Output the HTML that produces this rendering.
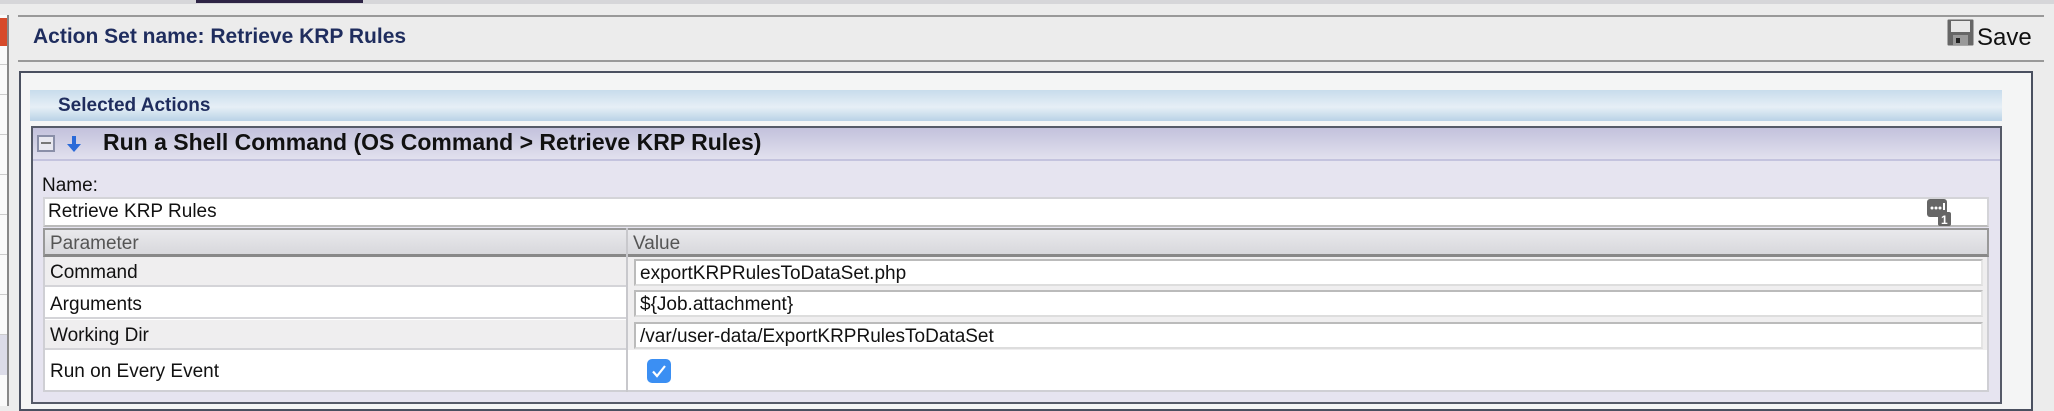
<!DOCTYPE html><html><head><style>
*{margin:0;padding:0;box-sizing:border-box}
body{width:2054px;height:406px;background:#ececec;position:relative;overflow:hidden;font-family:"Liberation Sans",sans-serif}
.a{position:absolute}
.t{white-space:nowrap;line-height:1}
.sr{position:absolute;left:0;width:7px;height:1px;background:#ccc}
</style></head><body>
<div class="a" style="left:0;top:0;width:2054px;height:4px;background:#d6d6d9"></div>
<div class="a" style="left:196px;top:0;width:167px;height:3px;background:#2e2445"></div>
<div class="a" style="left:0;top:15px;width:9px;height:391px;background:#fafafa;border-right:2px solid #888"></div>
<div class="a" style="left:0;top:18px;width:7px;height:28px;background:#d64a2a"></div>
<div class="sr" style="top:64px"></div><div class="sr" style="top:94px"></div><div class="sr" style="top:134px"></div><div class="sr" style="top:174px"></div><div class="sr" style="top:214px"></div><div class="sr" style="top:254px"></div><div class="sr" style="top:294px"></div><div class="sr" style="top:334px"></div><div class="sr" style="top:374px"></div>
<div class="a" style="left:0;top:335px;width:7px;height:40px;background:#dcdce8"></div>
<div class="a" style="left:18px;top:15px;width:2026px;height:2px;background:#999"></div>
<div class="a" style="left:18px;top:60px;width:2026px;height:2px;background:#999"></div>
<div class="a t" style="left:33px;top:26px;font-size:21px;font-weight:bold;color:#1f2d5e">Action Set name: Retrieve KRP Rules</div>
<svg class="a" style="left:1947px;top:19px" width="27" height="27" viewBox="0 0 27 27"><rect x="0.5" y="0.5" width="26" height="26" fill="#666" rx="1"/><rect x="4" y="2" width="19" height="11" fill="#e8e8e8"/><rect x="6" y="16" width="15" height="10" fill="#999"/><rect x="9" y="19" width="4" height="5" fill="#222"/></svg>
<div class="a t" style="left:1977px;top:26px;font-size:24px;color:#111">Save</div>
<div class="a" style="left:19px;top:71px;width:2014px;height:340px;background:#f4f5f5;border:2px solid #4a5060"></div>
<div class="a" style="left:30px;top:90px;width:1972px;height:31px;background:linear-gradient(#c8dcec,#e6eff6 55%,#b9d2e6)"></div>
<div class="a t" style="left:58px;top:96px;font-size:19px;font-weight:bold;color:#1f2d5e">Selected Actions</div>
<div class="a" style="left:31px;top:126px;width:1971px;height:278px;background:#e6e4f0;border:2px solid #555a68"></div>
<div class="a" style="left:33px;top:128px;width:1967px;height:33px;background:linear-gradient(#c3c1dc,#e1e0ee);border-bottom:2px solid #c4c3de"></div>
<div class="a" style="left:37px;top:135px;width:18px;height:17px;border:2px solid #8a8fa8;background:#e8e8f0"></div>
<div class="a" style="left:41px;top:142px;width:10px;height:2px;background:#777"></div>
<svg class="a" style="left:64px;top:134px" width="20" height="20" viewBox="0 0 20 20"><path d="M10 2v12" stroke="#2a6ad8" stroke-width="4"/><path d="M3 10l7 8 7-8z" fill="#2a6ad8"/></svg>
<div class="a t" style="left:103px;top:131px;font-size:23px;font-weight:bold;color:#111">Run a Shell Command (OS Command &gt; Retrieve KRP Rules)</div>
<div class="a t" style="left:42px;top:176px;font-size:19px;color:#111">Name:</div>
<div class="a" style="left:43px;top:197px;width:1946px;height:30px;background:#fff;border:2px solid #d4d4d8;border-bottom-color:#bbb"></div>
<div class="a t" style="left:48px;top:202px;font-size:19px;color:#111">Retrieve KRP Rules</div>
<svg class="a" style="left:1927px;top:199px" width="24" height="27" viewBox="0 0 24 27"><rect x="0" y="0" width="20" height="18" rx="3" fill="#666"/><circle cx="5" cy="9" r="1.5" fill="#fff"/><circle cx="9" cy="9" r="1.5" fill="#fff"/><circle cx="13" cy="9" r="1.5" fill="#fff"/><rect x="16" y="4" width="2" height="7" fill="#fff"/><rect x="11" y="13" width="13" height="14" rx="2" fill="#666"/><text x="14" y="25" font-size="12" font-weight="bold" fill="#fff" font-family="Liberation Sans">1</text></svg>
<div class="a" style="left:43px;top:228px;width:1946px;height:164px;background:#fff;border:2px solid #cfcfd4"></div>
<div class="a" style="left:43px;top:228px;width:1946px;height:29px;background:linear-gradient(#e9e9ec,#d8d8dc);border:2px solid #999;border-bottom:3px solid #888"></div>
<div class="a" style="left:626px;top:228px;width:2px;height:164px;background:#c8c8cc"></div>
<div class="a t" style="left:50px;top:234px;font-size:19px;color:#555">Parameter</div>
<div class="a t" style="left:633px;top:234px;font-size:19px;color:#555">Value</div>
<div class="a" style="left:45px;top:257px;width:581px;height:30px;background:#efeeef;border-bottom:2px solid #d4d4d8"></div>
<div class="a" style="left:45px;top:289px;width:581px;height:30px;background:#fff;border-bottom:2px solid #d4d4d8"></div>
<div class="a" style="left:45px;top:320px;width:581px;height:30px;background:#efeeef;border-bottom:2px solid #d4d4d8"></div>
<div class="a t" style="left:50px;top:263px;font-size:19px;color:#111">Command</div>
<div class="a t" style="left:50px;top:295px;font-size:19px;color:#111">Arguments</div>
<div class="a t" style="left:50px;top:326px;font-size:19px;color:#111">Working Dir</div>
<div class="a t" style="left:50px;top:362px;font-size:19px;color:#111">Run on Every Event</div>
<div class="a" style="left:628px;top:257px;width:1359px;height:93px;background:#efeeef"></div>
<div class="a" style="left:634px;top:259px;width:1349px;height:27px;background:#fff;border:2px solid #bbb;border-right-color:#e4e4e4;border-bottom-color:#ddd"></div>
<div class="a" style="left:634px;top:290px;width:1349px;height:27px;background:#fff;border:2px solid #bbb;border-right-color:#e4e4e4;border-bottom-color:#ddd"></div>
<div class="a" style="left:634px;top:322px;width:1349px;height:27px;background:#fff;border:2px solid #bbb;border-right-color:#e4e4e4;border-bottom-color:#ddd"></div>
<div class="a t" style="left:640px;top:264px;font-size:19px;color:#111">exportKRPRulesToDataSet.php</div>
<div class="a t" style="left:640px;top:295px;font-size:19px;color:#111">${Job.attachment}</div>
<div class="a t" style="left:640px;top:327px;font-size:19px;color:#111">/var/user-data/ExportKRPRulesToDataSet</div>
<svg class="a" style="left:647px;top:359px" width="24" height="24" viewBox="0 0 24 24"><rect width="24" height="24" rx="5" fill="#3b8ff3"/><path d="M6 12.5l4 4.5 8-10" stroke="#fff" stroke-width="2.2" fill="none"/></svg>
</body></html>
